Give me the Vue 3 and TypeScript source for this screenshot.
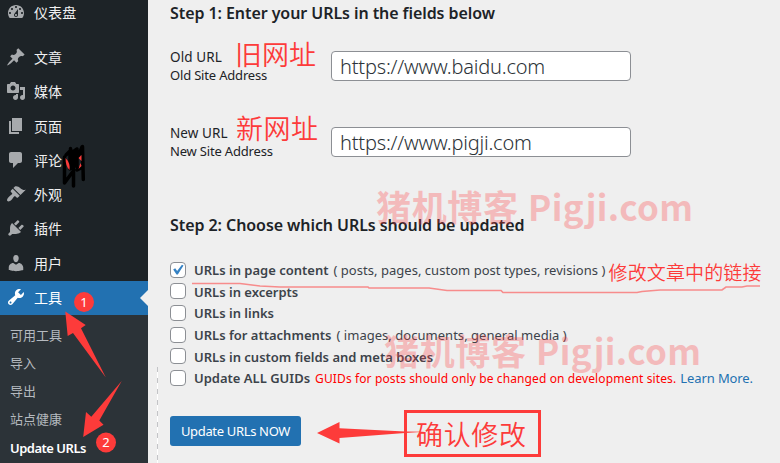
<script setup lang="ts">
import { ref } from 'vue'

interface MenuItem { label: string; icon: string; active?: boolean; first?: boolean }
interface UrlOption { id: string; label: string; note?: string; warn?: string; link?: string }

const menu: MenuItem[] = [
  { label: '仪表盘', first: true, icon: 'M3.76 16h12.48c1.1-1.37 1.76-3.11 1.76-5 0-4.42-3.58-8-8-8s-8 3.58-8 8c0 1.89.66 3.63 1.76 5zM10 4c.55 0 1 .45 1 1s-.45 1-1 1-1-.45-1-1 .45-1 1-1zM6 6c.55 0 1 .45 1 1s-.45 1-1 1-1-.45-1-1 .45-1 1-1zm8 0c.55 0 1 .45 1 1s-.45 1-1 1-1-.45-1-1 .45-1 1-1zm-5.37 5.55L12 7v6c0 1.1-.9 2-2 2s-2-.9-2-2c0-.57.24-1.08.63-1.45zM4 10c.55 0 1 .45 1 1s-.45 1-1 1-1-.45-1-1 .45-1 1-1zm12 0c.55 0 1 .45 1 1s-.45 1-1 1-1-.45-1-1 .45-1 1-1zm-5 3c0-.55-.45-1-1-1s-1 .45-1 1 .45 1 1 1 1-.45 1-1z' },
  { label: '文章', icon: 'M10.44 3.02l1.82-1.82 6.36 6.35-1.83 1.82c-1.05-.68-2.48-.57-3.41.36l-.75.75c-.92.93-1.04 2.35-.35 3.41l-1.83 1.82-2.41-2.41-2.8 2.79c-.42.42-3.38 2.71-3.8 2.29s1.86-3.39 2.28-3.81l2.79-2.79L4.1 9.36l1.83-1.82c1.05.69 2.48.57 3.4-.36l.75-.75c.93-.92 1.05-2.35.36-3.41z' },
  { label: '媒体', icon: 'M13 11V4c0-.55-.45-1-1-1h-1.67L9 1H5L3.67 3H2c-.55 0-1 .45-1 1v7c0 .55.45 1 1 1h10c.55 0 1-.45 1-1zM7 4.5c1.38 0 2.5 1.12 2.5 2.5S8.38 9.5 7 9.5 4.5 8.38 4.5 7 5.62 4.5 7 4.5zM14 6h5v10.5c0 1.38-1.12 2.5-2.5 2.5S14 17.88 14 16.5s1.12-2.5 2.5-2.5c.17 0 .34.02.5.05V9h-3V6zm-4 8.05V13h2v3.5c0 1.38-1.12 2.5-2.5 2.5S7 17.88 7 16.5 8.12 14 9.5 14c.17 0 .34.02.5.05z' },
  { label: '页面', icon: 'M6 15V2h10v13H6zm-1 1h8v2H3V5h2v11z' },
  { label: '评论', icon: 'M5 2h9c1.1 0 2 .9 2 2v7c0 1.1-.9 2-2 2h-2l-5 5v-5H5c-1.1 0-2-.9-2-2V4c0-1.1.9-2 2-2z' },
  { label: '外观', icon: 'M14.48 11.06L7.41 3.99l1.5-1.5c.5-.56 2.3-.47 3.51.32 1.21.8 1.43 1.28 2.91 2.1 1.18.64 2.45 1.26 4.45.85zm-.71.71L6.7 4.7 4.93 6.47c-.39.39-.39 1.02 0 1.41l1.06 1.06c.39.39.39 1.03 0 1.42-.6.6-1.43 1.11-2.21 1.69-.35.26-.7.53-1.01.84C1.43 14.23.4 16.08 1.4 17.07c.99 1 2.84-.03 4.18-1.36.31-.31.58-.66.85-1.02.57-.78 1.08-1.61 1.69-2.21.39-.39 1.02-.39 1.41 0l1.06 1.06c.39.39 1.02.39 1.41 0z' },
  { label: '插件', icon: 'M13.11 4.36L9.87 7.6 8 5.73l3.24-3.24c.35-.34 1.05-.2 1.56.32.52.51.66 1.21.31 1.55zm-8 1.77l.91-1.12 9.01 9.01-1.19.84c-.71.71-2.63 1.16-3.82 1.16H6.14L4.9 17.26c-.59.59-1.54.59-2.12 0-.59-.58-.59-1.53 0-2.12l1.24-1.24v-3.88c0-1.13.4-3.19 1.09-3.89zm7.26 3.97l3.24-3.24c.34-.35 1.04-.21 1.55.31.52.51.66 1.21.31 1.55l-3.24 3.25z' },
  { label: '用户', icon: 'M10 9.25c-2.27 0-2.73-3.44-2.73-3.44C7 4.02 7.82 2 9.97 2c2.16 0 2.98 2.02 2.71 3.81 0 0-.41 3.44-2.68 3.44zm0 2.57L12.72 10c2.39 0 4.52 2.33 4.52 4.53v2.49s-3.65 1.13-7.24 1.13c-3.65 0-7.24-1.13-7.24-1.13v-2.49c0-2.25 1.94-4.48 4.47-4.48z' },
  { label: '工具', active: true, icon: 'M16.68 9.77c-1.34 1.34-3.3 1.67-4.95.99l-5.41 6.52c-.99.99-2.59.99-3.58 0s-.99-2.59 0-3.57l6.52-5.42c-.68-1.65-.35-3.61.99-4.95 1.28-1.28 3.12-1.62 4.72-1.06l-2.89 2.89 2.82 2.82 2.86-2.87c.53 1.58.18 3.39-1.08 4.65zM3.81 16.21c.4.39 1.04.39 1.43 0 .4-.4.4-1.04 0-1.43-.39-.4-1.03-.4-1.43 0-.39.39-.39 1.03 0 1.43z' },
]
const submenu = ['可用工具', '导入', '导出', '站点健康', 'Update URLs']

const oldUrl = ref('https://www.baidu.com')
const newUrl = ref('https://www.pigji.com')
const selected = ref<string[]>(['content'])
const options: UrlOption[] = [
  { id: 'content', label: 'URLs in page content', note: '( posts, pages, custom post types, revisions )' },
  { id: 'excerpts', label: 'URLs in excerpts' },
  { id: 'links', label: 'URLs in links' },
  { id: 'attachments', label: 'URLs for attachments', note: '( images, documents, general media )' },
  { id: 'custom', label: 'URLs in custom fields and meta boxes' },
  { id: 'guids', label: 'Update ALL GUIDs', warn: 'GUIDs for posts should only be changed on development sites.', link: 'Learn More.' },
]
</script>

<template>
  <div class="screen">
    <nav class="sidebar">
      <ul class="menu">
        <li v-for="m in menu" :key="m.label" :class="{ active: m.active, first: m.first }">
          <svg class="icon" viewBox="0 0 20 20"><path :d="m.icon" fill-rule="evenodd" /></svg>
          <span>{{ m.label }}</span>
        </li>
      </ul>
      <ul class="submenu">
        <li v-for="s in submenu" :key="s" :class="{ current: s === 'Update URLs' }">{{ s }}</li>
      </ul>
    </nav>

    <main class="content">
      <h3 class="step-one">Step 1: Enter your URLs in the fields below</h3>
      <div class="field">
        <label><span class="name">Old URL</span><span>Old Site Address</span></label>
        <input v-model="oldUrl" type="text" />
      </div>
      <div class="field">
        <label><span class="name">New URL</span><span>New Site Address</span></label>
        <input v-model="newUrl" type="text" />
      </div>
      <h3 class="step-two">Step 2: Choose which URLs should be updated</h3>
      <div class="options">
        <label v-for="o in options" :key="o.id" class="option">
          <input v-model="selected" type="checkbox" :value="o.id" />
          <span class="box">
            <svg v-if="selected.includes(o.id)" viewBox="0 0 16 16"><path d="M2.500 7.500 4.800 6l2.200 3.200L12.500 2l1.800.8L7.800 13H6.300z" /></svg>
          </span>
          <span class="text"><strong>{{ o.label }}</strong><span v-if="o.note" class="note">{{ o.note }}</span><span v-if="o.warn" class="warn">{{ o.warn }}</span><a v-if="o.link">{{ o.link }}</a></span>
        </label>
      </div>
      <button type="button">Update URLs NOW</button>
    </main>

    <i class="guide"></i>
    <svg class="watermark" viewBox="0 0 780 463">
      <text x="376" y="221" textLength="142">猪机博客</text>
      <text x="528" y="221" textLength="165">Pigji.com</text>
      <text x="384" y="365" textLength="142">猪机博客</text>
      <text x="536" y="365" textLength="165">Pigji.com</text>
    </svg>
    <svg class="notes" viewBox="0 0 780 463">
      <path class="scribble" d="M64.500 157v26l8-11M66 155l4-4v18M70.500 148.500v20M73.500 186v-35M75.500 150l1.500-1v12M77 149v18M78 157l4-10M77 170l4-2M82.500 146.500l.8 33" />
      <path d="M65.500 158q5 5 4 12-4-4-4-12zM81.500 155v6l-3-3zM80.500 163l1 3-3 3z" />
      <circle cx="84" cy="302" r="10" />
      <circle cx="106" cy="442.500" r="10" />
      <text class="digit" x="84" y="306.500">1</text>
      <text class="digit" x="106" y="447">2</text>
      <path d="M65.300 311.500 85.700 325l-4.700 3.300 24.800 49.200L73 333l-5.300 3z" />
      <path d="M121.700 381 99.300 420.500l4.200 4.200-20.300 12.300 2.800-25 5.300 4.700z" />
      <path d="M317 433 339.500 422v6.200L405 431.500l20 .3-20 1.200-65.500 5v5.500z" />
      <rect x="405.500" y="411.500" width="134" height="44" />
      <text class="big" x="235" y="65" textLength="81">旧网址</text>
      <text class="big" x="236" y="139" textLength="82">新网址</text>
      <text class="big" x="416" y="445" textLength="110">确认修改</text>
      <text class="small" x="608.500" y="279.500" textLength="153">修改文章中的链接</text>
      <path class="underline" d="M192 283.500h48l20 2.500 20 1h88l1 1h60l18 2.500h54l2 2h134l5-1 18-1.500h62l4-3h16l5-1h13" />
    </svg>
  </div>
</template>

<style>
body { margin: 0; }
</style>

<style scoped>
.screen {
  position: relative;
  display: flex;
  width: 780px;
  height: 463px;
  overflow: hidden;
  background: #efefef;
  color: #3c434a;
  font: 13px/18px "Noto Sans", "Noto Sans CJK SC", sans-serif;
}
ul { list-style: none; margin: 0; padding: 0; }
.sidebar { display: flex; flex-direction: column; width: 148px; flex: none; background: #1d2327; }
.menu { margin-top: -4px; }
.menu li {
  display: flex;
  align-items: center;
  gap: 8px;
  box-sizing: border-box;
  height: 34.300px;
  padding: 0 0 2px 6px;
  color: #f0f0f1;
  font: 14px/20px "Noto Sans CJK SC", sans-serif;
  letter-spacing: .1px;
}
.menu .first { margin-bottom: 10.500px; }
.menu .active { position: relative; background: #2271b1; color: #fff; }
.menu .active::after {
  content: "";
  position: absolute;
  top: 9px;
  right: 0;
  border: 8px solid transparent;
  border-left: 0;
  border-right-color: #efefef;
}
.icon { width: 20px; height: 20px; fill: #a7aaad; }
.active .icon { fill: #fff; }
.submenu { flex: 1; padding: 6px 0 0 10px; background: #2c3338; }
.submenu li {
  height: 28px;
  color: #b5babf;
  font: 13px/28px "Noto Sans CJK SC", sans-serif;
}
.submenu .current { color: #fff; font: 600 13px/30px "Noto Sans", sans-serif; letter-spacing: -.5px; }

.content { display: flex; flex-direction: column; align-items: flex-start; padding-left: 22px; }
h3 { margin: 0; color: #1d2327; font-size: 16px; font-weight: 600; line-height: 22px; letter-spacing: -.07px; }
.step-one { margin: 2px 0 22px; }
.field { display: flex; height: 76px; }
.field label { display: flex; flex-direction: column; width: 161px; padding-top: 2px; color: #1d2327; letter-spacing: -.18px; }
.field .name { font-size: 13.500px; letter-spacing: .1px; }
.field input {
  box-sizing: border-box;
  width: 300px;
  height: 30px;
  margin-top: 5px;
  padding: 1px 8px;
  border: 1px solid #8c8f94;
  border-radius: 4px;
  background: #fff;
  color: #2c3338;
  font: 350 20px/26px "Noto Sans", sans-serif;
  letter-spacing: -.2px;
}
.step-two { margin: 16px 0 23px; }
.options { display: flex; flex-direction: column; }
.option { display: flex; align-items: center; gap: 8px; height: 21.600px; white-space: nowrap; }
.option input { position: absolute; opacity: 0; }
.box {
  box-sizing: border-box;
  width: 16px;
  height: 16px;
  border: 1px solid #8c8f94;
  border-radius: 4px;
  background: #fff;
}
.box svg { display: block; width: 14px; height: 14px; fill: #3582c4; }
.text { padding-top: 1px; }
.text strong { font-weight: 600; }
.note { margin-left: 5px; letter-spacing: .03px; }
.warn { margin-left: 5px; color: #f00; font-size: 12px; letter-spacing: .12px; }
a { margin-left: 4px; color: #2271b1; letter-spacing: -.1px; }
button {
  width: 131px;
  height: 30px;
  margin-top: 27.500px;
  padding: 0;
  border: 0;
  border-radius: 3px;
  background: #2271b1;
  color: #fff;
  font: 13px/29px "Noto Sans", sans-serif;
  letter-spacing: -.33px;
}
.guide {
  position: absolute;
  left: 157px;
  top: 367px;
  bottom: 0;
  width: 1px;
  background: repeating-linear-gradient(#c3c4c7 0 5px, #fff 5px 11px);
}
.watermark, .notes { position: absolute; inset: 0; width: 780px; height: 463px; pointer-events: none; }
.watermark { fill: #ff3c40; opacity: .29; font: 700 35px "Noto Sans CJK SC", sans-serif; }
.notes { fill: #fd3b3a; font-family: "Noto Sans CJK SC", sans-serif; font-weight: 350; }
.notes rect { fill: none; stroke: #fd3b3a; stroke-width: 3; }
.notes .scribble { fill: none; stroke: #000; stroke-width: 3.500; stroke-linecap: round; stroke-linejoin: round; }
.notes .underline { fill: none; stroke: #f78c8c; stroke-width: 1.700; }
.digit { fill: #fff; font: 13px "Noto Sans", sans-serif; text-anchor: middle; }
.big { font-size: 27px; }
.small { font-size: 19px; }
</style>
